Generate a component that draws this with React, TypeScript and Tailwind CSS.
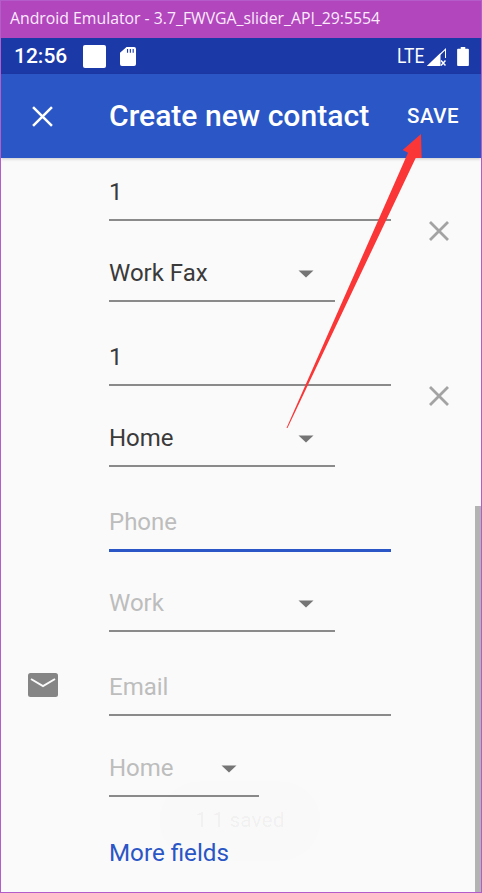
interface FieldProperties {
    text: string;
    height: string;
    placeholder?: boolean;
    focused?: boolean;
}

function Spinner() {
    return (
        <svg width="16" height="8" viewBox="0 0 16 8" className="shrink-0 mb-[7px]">
            <path d="M0.5 0.5H15.5L8 7.5Z" fill="#757575" />
        </svg>
    );
}

function CloseIcon({ color, size, stroke }: { color: string; size: number; stroke: number }) {
    return (
        <svg width={size} height={size} viewBox="0 0 20 20">
            <path d="M1 1L19 19M19 1L1 19" stroke={color} strokeWidth={stroke} fill="none" />
        </svg>
    );
}

// plain text input row with an underline, the focused one is a bit thicker
function TextField({ text, height, placeholder, focused }: FieldProperties) {
    return (
        <div
            className={`ml-[108px] w-[282px] flex items-end pb-[15px] ${height} ${
                focused ? 'border-b-[3px] border-[#2a56c6]' : 'border-b-2 border-[#8a8a8a]'
            }`}
        >
            <span className={`text-[24px] leading-none ${placeholder ? 'text-[#bdbdbd]' : 'text-[#3a3a3a]'}`}>{text}</span>
        </div>
    );
}

// dropdown row, underline is shorter than the inputs
function SelectField({ text, height, placeholder, width }: FieldProperties & { width: string }) {
    return (
        <div className={`ml-[108px] flex items-end justify-between pb-[15px] border-b-2 border-[#8a8a8a] ${height} ${width}`}>
            <span className={`text-[24px] leading-none ${placeholder ? 'text-[#bdbdbd]' : 'text-[#3a3a3a]'}`}>{text}</span>
            <Spinner />
        </div>
    );
}

export default function App() {
    return (
        <div className="relative w-[482px] h-[893px] overflow-hidden border border-[#b55ccb] bg-[#fafafa] font-['Roboto',sans-serif]">
            {/* Window title bar */}
            <div className="h-[37px] bg-[#b146bd] flex items-center pl-[9px] pb-[1px] text-[15.8px] text-[#fbeafc] font-['Open_Sans',sans-serif]">
                Android Emulator - 3.7_FWVGA_slider_API_29:5554
            </div>

            {/* Status bar */}
            <div className="h-[36px] bg-[#1c39a8] flex items-center pl-[13px] pr-[12px] text-white">
                <span className="text-[21px] font-medium leading-none">12:56</span>
                <div className="ml-[16px] w-[23px] h-[23px] bg-white rounded-[2px]" />
                <svg width="16" height="19" viewBox="0 0 17 20" className="ml-[14px]">
                    <path d="M7 0H15Q17 0 17 2V18Q17 20 15 20H2Q0 20 0 18V6Z" fill="#fff" />
                    <path d="M8 2V6M11 2V6M14 2V6" stroke="#1c39a8" strokeWidth="1.2" />
                </svg>
                <span className="ml-auto text-[20px] leading-none origin-right scale-x-[0.87]">LTE</span>
                <svg width="19" height="18" viewBox="0 0 19 18" className="ml-[3px] mt-[2px]">
                    <path d="M0 18L19 0V10H18V2.5L3.5 16.5H12V18Z" fill="#fff" />
                    <path d="M0 18L13.5 5V18Z" fill="#fff" />
                    <path d="M14 12.5L18.5 17.5M18.5 12.5L14 17.5" stroke="#fff" strokeWidth="1.5" />
                </svg>
                <svg width="12" height="19" viewBox="0 0 13 21" className="ml-[11px]">
                    <path d="M4 0H9V2H12Q13 2 13 3V20Q13 21 12 21H1Q0 21 0 20V3Q0 2 1 2H4Z" fill="#fff" />
                </svg>
            </div>

            {/* App bar */}
            <div className="h-[84px] bg-[#2a56c6] flex items-center text-white shadow-[0_1px_3px_rgba(0,0,0,0.2)]">
                <div className="ml-[31px]">
                    <CloseIcon color="#ffffff" size={21} stroke={2.4} />
                </div>
                <span className="ml-[56px] mt-[1px] text-[30.1px] font-medium leading-none">Create new contact</span>
                <span className="ml-auto mr-[22px] text-[20.5px] font-medium leading-none tracking-[0.5px]">SAVE</span>
            </div>

            {/* Form */}
            <div className="flex flex-col">
                <TextField text="1" height="h-[63px]" />
                <SelectField text="Work Fax" height="h-[81px]" width="w-[226px] pr-[21px]" />
                <TextField text="1" height="h-[84px]" />
                <SelectField text="Home" height="h-[81px]" width="w-[226px] pr-[21px]" />
                <TextField text="Phone" height="h-[85px]" placeholder focused />
                <SelectField text="Work" height="h-[80px]" placeholder width="w-[226px] pr-[21px]" />
                <div className="relative">
                    <TextField text="Email" height="h-[84px]" placeholder />
                    <svg width="30" height="24" viewBox="0 0 30 24" className="absolute left-[27px] top-[41px]">
                        <rect width="30" height="24" rx="2.5" fill="#858585" />
                        <path d="M3 6L15 13L27 6" stroke="#fafafa" strokeWidth="2" fill="none" />
                    </svg>
                </div>
                <SelectField text="Home" height="h-[81px]" placeholder width="w-[150px] pr-[22px]" />
                <span className="ml-[108px] mt-[44px] text-[24.2px] leading-none text-[#2a56c6]">More fields</span>
            </div>

            {/* Remove buttons sit in the right gutter */}
            <div className="absolute left-[428px] top-[220px]">
                <CloseIcon color="#a3a3a3" size={20} stroke={2.8} />
            </div>
            <div className="absolute left-[428px] top-[385px]">
                <CloseIcon color="#a3a3a3" size={20} stroke={2.8} />
            </div>

            {/* Fading toast */}
            <div className="absolute left-[158px] top-[780px] w-[162px] h-[80px] rounded-[40px] bg-black/[0.004] flex items-center justify-center text-[21px] text-black/[0.05]">
                1 1 saved
            </div>

            {/* Scrollbar */}
            <div className="absolute right-0 top-[505px] bottom-0 w-[6px] bg-[#b3b3b3]" />

            {/* Red annotation arrow */}
            <svg width="482" height="893" viewBox="0 0 482 893" className="absolute -left-px -top-px pointer-events-none">
                <path d="M286.5 428L287.5 428L415.7 158L421.7 158L421 134L402.7 150L408 152.7Z" fill="#fb3636" />
            </svg>
        </div>
    );
}
